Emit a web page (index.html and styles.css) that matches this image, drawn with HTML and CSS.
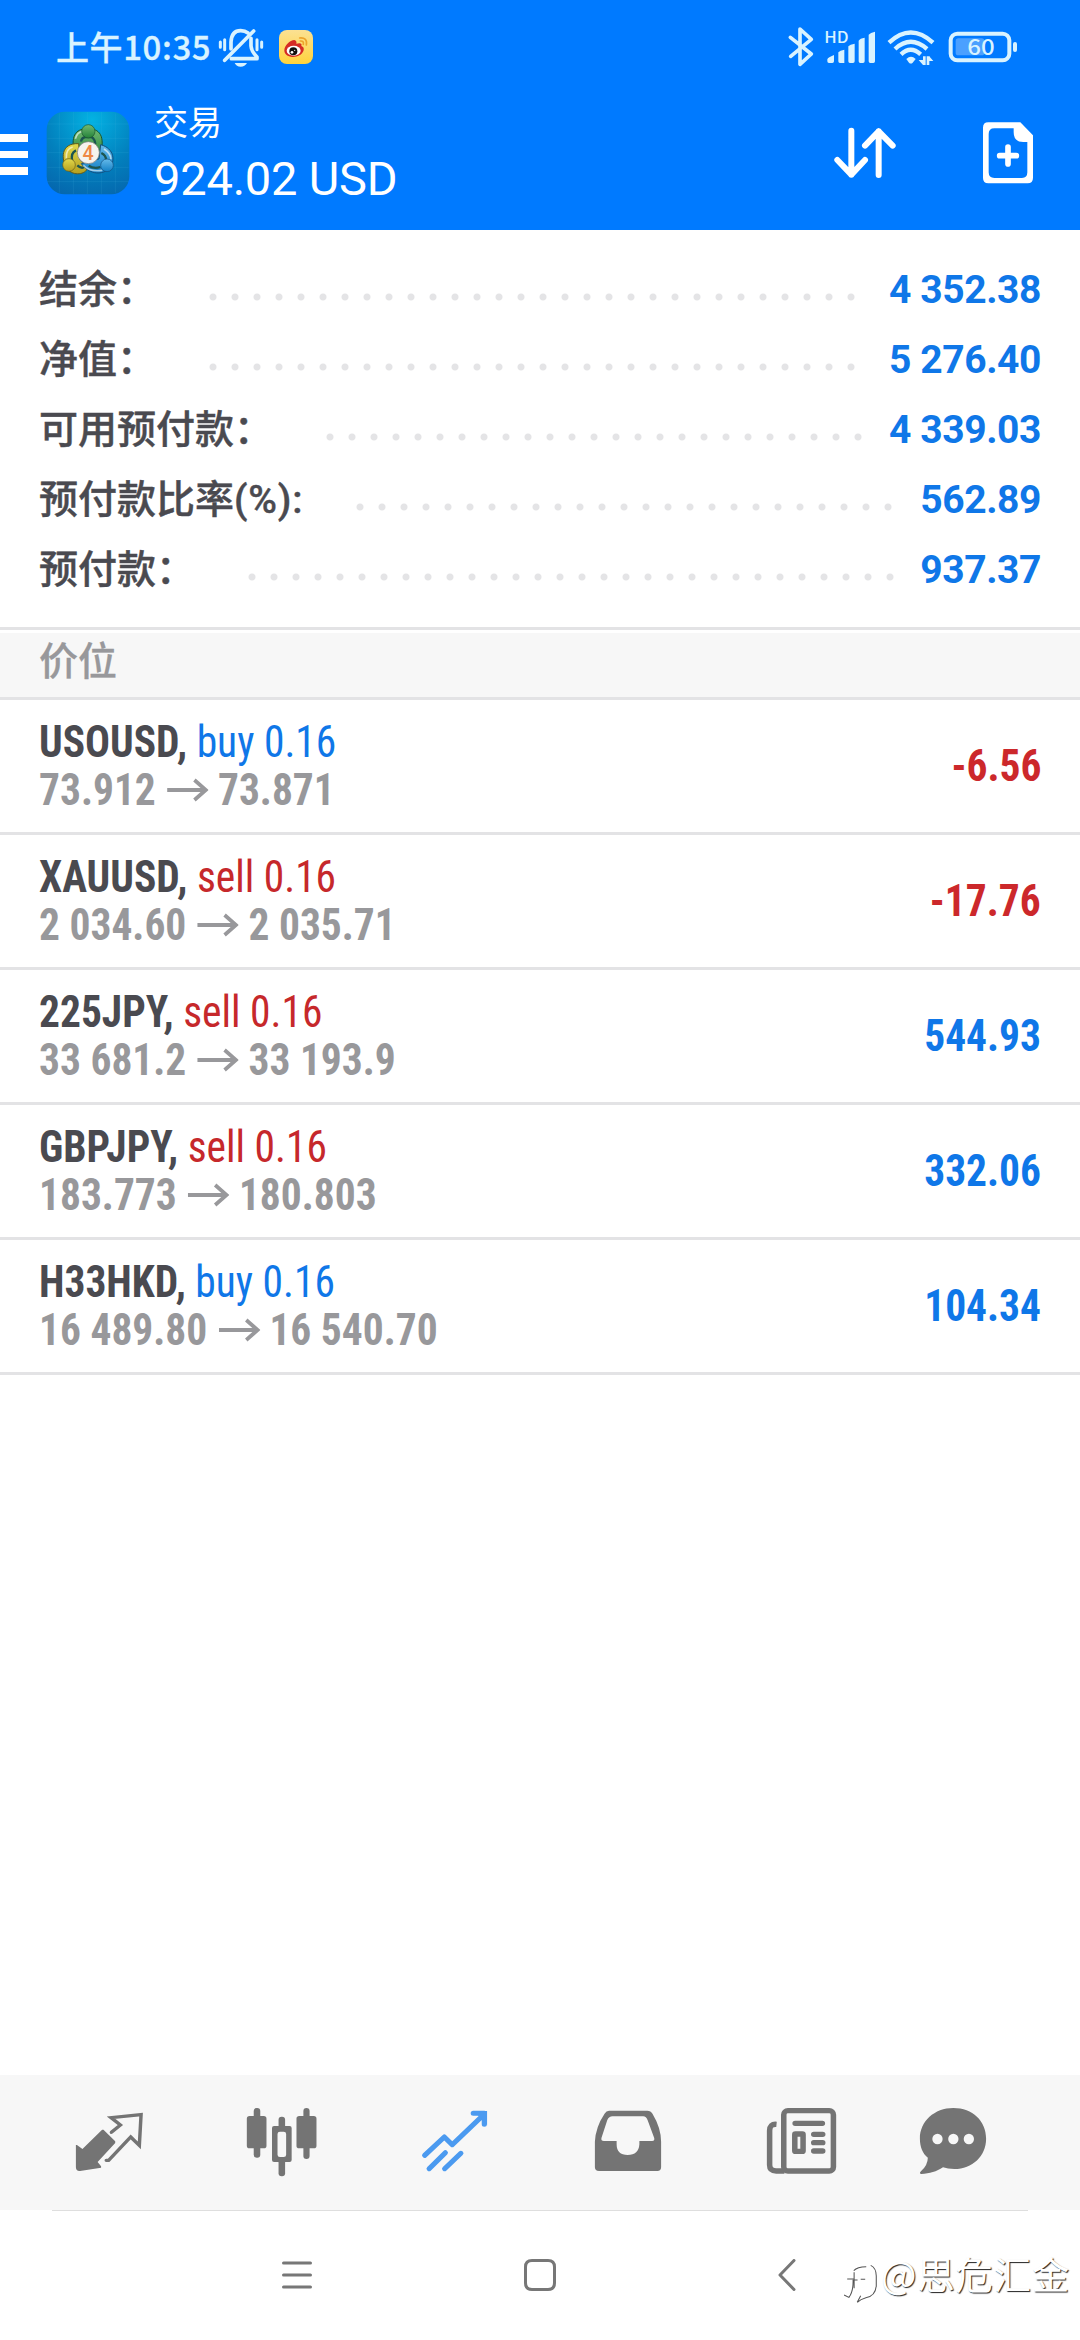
FILE: index.html
```html
<!DOCTYPE html>
<html lang="zh-CN">
<head>
<meta charset="utf-8">
<title>交易</title>
<link rel="stylesheet" href="styles.css">
</head>
<body>
<div class="screen">
  <header class="header">
    <div class="status">
      <span class="clock">上午10:35</span>
      <svg class="bell" viewBox="648 66 150 150" fill="none" stroke="#d9f3ff" stroke-linecap="round" stroke-linejoin="round">
        <path d="M693 147V126Q695 92 722 92Q735 92 744 99M753 115V138Q754 154 771 171V176H694" stroke-width="11"/>
        <path d="M761 93L674 181" stroke-width="11"/>
        <path d="M661 126v16M674 119v30M771 119v30M785 126v16" stroke-width="9"/>
        <path d="M704 189H741Q735 200 722 200T704 189Z" fill="#d9f3ff" stroke="none"/>
      </svg>
      <svg class="weibo" viewBox="834 66 108 150">
        <defs><linearGradient id="wb" x1="0" y1="0" x2="0" y2="1"><stop offset="0" stop-color="#fbe193"/><stop offset="1" stop-color="#ffd33c"/></linearGradient></defs>
        <rect x="837" y="90" width="102" height="102" rx="24" fill="url(#wb)"/>
        <path d="M853 151C853 137 870 120 883 120Q891 122 889 131Q908 126 904 138Q913 141 911 151C907 166 889 172 877 171C863 170 853 163 853 151Z" fill="#d52b25"/>
        <ellipse cx="881" cy="152" rx="21" ry="15" fill="#fff"/>
        <circle cx="880" cy="154" r="12" fill="#111"/><circle cx="876" cy="157" r="4" fill="#fff"/><circle cx="884" cy="151" r="2" fill="#fff"/>
        <path d="M899 114Q923 112 919 135M901 123Q912 122 910 133" fill="none" stroke="#eda32b" stroke-width="5" stroke-linecap="round"/>
      </svg>
      <div class="indicators">
        <svg class="bluetooth" viewBox="78 66 90 150" fill="none" stroke="#d9f3ff" stroke-width="11" stroke-linecap="round" stroke-linejoin="round"><path d="M91 112L154 162L120 193V87L154 118L92 169"/></svg>
        <svg class="signal" viewBox="186 66 168 150" fill="#d9f3ff">
          <text x="193" y="129" font-size="46" font-weight="500" textLength="73" lengthAdjust="spacingAndGlyphs">HD</text>
          <path d="M202 178Q204 172 222 165V184Q222 189 217 189H207Q202 189 202 184ZM235 157Q240 151 253 149V189H240Q235 189 235 184ZM265 139Q270 133 284 131V184Q284 189 279 189H270Q265 189 265 184ZM296 122Q300 115 314 113V184Q314 189 309 189H301Q296 189 296 184ZM326 104Q331 98 345 95V184Q345 189 340 189H331Q326 189 326 184Z"/>
        </svg>
        <svg class="wifi" viewBox="378 66 150 150" fill="none" stroke="#d9f3ff" stroke-width="13">
          <path d="M387 128Q452 67 519 128M405 147Q452 104 501 147M423 163Q452 136 482 163"/>
          <path d="M439 177Q453 164 467 177L458 188Q453 193 447 188Z" fill="#d9f3ff" stroke="none"/>
          <path d="M493 169v26M504 169v26" stroke-width="8"/><path d="M476 180h13v15ZM507 168v15h13Z" fill="#d9f3ff" stroke="none"/>
        </svg>
        <svg class="battery" viewBox="558 66 222 150">
          <rect x="587" y="115" width="86" height="51" rx="8" fill="#4ba0ff"/>
          <rect x="572" y="101" width="176" height="80" rx="20" fill="none" stroke="#d9f3ff" stroke-width="12"/>
          <rect x="759" y="126" width="12" height="30" rx="6" fill="#d9f3ff"/>
          <text x="622" y="166" font-size="66" font-weight="500" fill="#d9f3ff" textLength="82" lengthAdjust="spacingAndGlyphs">60</text>
        </svg>
      </div>
    </div>
    <div class="appbar">
      <div class="burger"><i></i><i></i><i></i></div>
      <svg class="logo" viewBox="138 333 252 252">
        <defs>
          <radialGradient id="bg" cx=".55" cy=".1" r=".95"><stop offset="0" stop-color="#03b2e3"/><stop offset=".6" stop-color="#0280bd"/><stop offset="1" stop-color="#0568ae"/></radialGradient>
          <linearGradient id="gr" x1="0" y1="0" x2="0" y2="1"><stop offset="0" stop-color="#73ba72"/><stop offset="1" stop-color="#23823a"/></linearGradient>
          <linearGradient id="ye" x1="0" y1="0" x2="0" y2="1"><stop offset="0" stop-color="#e2d94c"/><stop offset="1" stop-color="#b5a020"/></linearGradient>
          <linearGradient id="bl" x1="0" y1="0" x2="0" y2="1"><stop offset="0" stop-color="#65b9e9"/><stop offset="1" stop-color="#1380c6"/></linearGradient>
        </defs>
        <rect x="140" y="335" width="248" height="248" rx="54" fill="url(#bg)"/>
        <path d="M178 340V578M220 336V582M262 336V582M304 336V582M346 340V578M142 372H386M142 415H386M142 458H386M142 502H386M142 545H386" stroke="#53bfe4" stroke-opacity=".2" stroke-width="2"/>
        <path d="M223 458C210 400 233 386 264 386C297 386 318 405 300 470Z" fill="url(#gr)" stroke="#19552b" stroke-width="3"/>
        <path d="M236 431C180 428 183 480 202 507C221 530 257 523 263 504L240 480Z" fill="url(#ye)" stroke="#635a18" stroke-width="3"/>
        <path d="M302 434C343 445 348 484 326 508C300 527 266 521 244 491L297 477Z" fill="url(#bl)" stroke="#125080" stroke-width="3"/>
        <path d="M243 425Q245 413 256 411L274 411Q285 417 286 432M217 483Q211 459 228 451M304 459Q319 466 318 481M232 496Q245 508 254 500M266 497Q283 508 301 501" fill="none" stroke="#1c5550" stroke-width="7"/>
        <path d="M226 416Q232 395 249 394M199 475Q197 446 218 441M312 447Q333 461 333 478M250 496Q270 517 307 511" fill="none" stroke="#fff" stroke-opacity=".6" stroke-width="5"/>
        <circle cx="265" cy="394" r="20" fill="url(#gr)" stroke="#19552b" stroke-width="2"/><circle cx="207" cy="495" r="19" fill="url(#ye)" stroke="#635a18" stroke-width="2"/><circle cx="321" cy="496" r="19" fill="url(#bl)" stroke="#125080" stroke-width="2"/>
        <circle cx="265" cy="458" r="33" fill="#f6f3ee" stroke="#777" stroke-width="2"/>
        <text x="264" y="480" text-anchor="middle" font-family="Roboto, sans-serif" font-size="59" font-weight="500" fill="#ee8845">4</text>
      </svg>
      <div class="titles"><div class="title">交易</div><div class="total">924.02 USD</div></div>
      <svg class="sort" viewBox="216 375 198 168" fill="none" stroke="#fff" stroke-width="18" stroke-linecap="round" stroke-linejoin="round"><path d="M274 392V524M232 480L274 524L315 480M356 525V394M315 437L356 394L398 437"/></svg>
      <svg class="add" viewBox="666 363 156 192">
        <path d="M685 367H781L819 406V533Q819 550 803 550H685Q669 550 669 534V383Q669 367 685 367ZM703 385Q686 385 686 402V517Q686 534 703 534H786Q802 534 802 517V426H790Q761 426 761 397V385Z" fill="#fff" fill-rule="evenodd"/>
        <path d="M719 467H769M744 441V492" stroke="#fff" stroke-width="17" stroke-linecap="round"/>
      </svg>
    </div>
  </header>

  <section class="summary">
    <div class="item"><span class="label">结余：</span><span class="dots" style="width:660px"></span><span class="value">4 352.38</span></div>
    <div class="item"><span class="label">净值：</span><span class="dots" style="width:660px"></span><span class="value">5 276.40</span></div>
    <div class="item"><span class="label">可用预付款：</span><span class="dots" style="width:550px"></span><span class="value">4 339.03</span></div>
    <div class="item"><span class="label">预付款比率<span class="unit">(%):</span></span><span class="dots" style="width:550px"></span><span class="value">562.89</span></div>
    <div class="item"><span class="label">预付款：</span><span class="dots" style="width:660px"></span><span class="value">937.37</span></div>
  </section>

  <h2 class="section">价位</h2>

  <main class="positions">
    <div class="position"><div class="info"><div><b>USOUSD,</b> <span class="buy">buy 0.16</span></div><div class="prices">73.912<svg class="arrow" viewBox="0 0 44 24"><path d="M0 12H41M29 2L41 12L29 22"/></svg>73.871</div></div><div class="profit loss">-6.56</div></div>
    <div class="position"><div class="info"><div><b>XAUUSD,</b> <span class="sell">sell 0.16</span></div><div class="prices">2 034.60<svg class="arrow" viewBox="0 0 44 24"><path d="M0 12H41M29 2L41 12L29 22"/></svg>2 035.71</div></div><div class="profit loss">-17.76</div></div>
    <div class="position"><div class="info"><div><b>225JPY,</b> <span class="sell">sell 0.16</span></div><div class="prices">33 681.2<svg class="arrow" viewBox="0 0 44 24"><path d="M0 12H41M29 2L41 12L29 22"/></svg>33 193.9</div></div><div class="profit">544.93</div></div>
    <div class="position"><div class="info"><div><b>GBPJPY,</b> <span class="sell">sell 0.16</span></div><div class="prices">183.773<svg class="arrow" viewBox="0 0 44 24"><path d="M0 12H41M29 2L41 12L29 22"/></svg>180.803</div></div><div class="profit">332.06</div></div>
    <div class="position"><div class="info"><div><b>H33HKD,</b> <span class="buy">buy 0.16</span></div><div class="prices">16 489.80<svg class="arrow" viewBox="0 0 44 24"><path d="M0 12H41M29 2L41 12L29 22"/></svg>16 540.70</div></div><div class="profit">104.34</div></div>
  </main>

  <nav class="tabs">
    <svg viewBox="199 93 232 240" preserveAspectRatio="none">
      <path d="M295 179H299L333 214V219L282 276L292 289V293L231 303Q219 304 219 292V225H222L238 237Z" fill="#747474"/>
      <path d="M322 187L348 165L321 143L408 134L403 226L378 201L314 271H307" fill="none" stroke="#747474" stroke-width="10" stroke-linecap="round"/>
    </svg>
    <svg viewBox="701 93 232 240" preserveAspectRatio="none" fill="#747474">
      <rect x="735" y="114" width="19" height="149" rx="9"/><rect x="715" y="138" width="57" height="97" rx="8"/>
      <rect x="879" y="114" width="18" height="153" rx="9"/><rect x="859" y="138" width="58" height="97" rx="8"/>
      <rect x="807" y="140" width="19" height="36" rx="9"/><rect x="807" y="268" width="19" height="51" rx="9"/>
      <path fill-rule="evenodd" d="M794 168H839Q845 168 845 174V270Q845 276 839 276H794Q788 276 788 270V174Q788 168 794 168ZM811 185Q804 185 804 192V254Q804 261 811 261H822Q829 261 829 254V192Q829 185 822 185Z"/>
    </svg>
    <svg viewBox="1204 93 232 240" preserveAspectRatio="none" fill="none" stroke="#4b9af0" stroke-width="15" stroke-linecap="round" stroke-linejoin="round">
      <path d="M1232 256L1289 201L1312 224L1403 134M1373 130H1405V163"/><path d="M1245 296L1292 248M1290 296L1337 250"/>
      <path d="M1372 123H1413V166L1400 148Z" fill="#4b9af0" stroke="none"/>
    </svg>
    <svg viewBox="138 93 232 240" preserveAspectRatio="none">
      <path d="M199 122H310Q320 122 325 131Q350 174 350 215V292Q350 303 339 303H170Q158 303 158 292V215Q160 171 186 131Q191 122 199 122ZM209 139Q199 139 194 150L177 204Q175 213 184 213H221V223Q221 255 253 255T287 223V213H324Q332 213 330 204L311 151Q307 139 298 139Z" fill="#747474" fill-rule="evenodd"/>
    </svg>
    <svg viewBox="640 93 232 240" preserveAspectRatio="none" fill="none" stroke="#747474" stroke-width="16">
      <rect x="706" y="122" width="144" height="181" rx="12"/><path d="M685 163Q665 161 665 182V285Q665 303 684 303H708"/>
      <path d="M739 160H818M793 193H819M793 218H819M793 243H819" stroke-linecap="round"/>
      <rect x="738" y="192" width="24" height="52" rx="2"/>
    </svg>
    <svg viewBox="1083 93 232 240" preserveAspectRatio="none">
      <path d="M1200 114C1256 114 1295 153 1295 206C1295 258 1255 297 1203 297Q1183 297 1170 292C1151 305 1132 311 1107 312Q1100 311 1106 304Q1126 285 1126 263C1111 251 1103 230 1103 206C1103 154 1145 114 1200 114Z" fill="#747474"/>
      <g fill="#f7f7f7"><ellipse cx="1154" cy="207" rx="15" ry="16"/><ellipse cx="1200" cy="207" rx="15" ry="16"/><ellipse cx="1245" cy="207" rx="15" ry="16"/></g>
    </svg>
  </nav>

  <footer class="system">
    <svg class="recent" viewBox="0 0 32 32" fill="none" stroke="#777" stroke-width="3" stroke-linecap="round"><path d="M2.500 4H29.500M2.500 16H29.500M2.500 28H29.500"/></svg>
    <svg class="home" viewBox="0 0 32 32" fill="none" stroke="#777" stroke-width="3"><path d="M8 1.500H24Q30.500 1.500 30.500 8V24Q30.500 30.500 24 30.500H8Q1.500 30.500 1.500 24V8Q1.500 1.500 8 1.500Z"/></svg>
    <svg class="back" viewBox="0 0 18 32" fill="none" stroke="#777" stroke-width="3" stroke-linecap="round" stroke-linejoin="round"><path d="M16 1.500L2 16L16 30.500"/></svg>
    <div class="watermark">
      <svg viewBox="876 570 104 135" preserveAspectRatio="none" fill="none" stroke="#555" stroke-width="3">
        <path d="M910 602Q920 590 946 590M891 627H911V607M908 629Q909 665 896 682L882 675M911 655V630H921M930 628H943M959 586Q975 594 975 618V648Q972 679 945 683Q930 687 920 697M920 697L930 677"/>
      </svg>
      <span>@思危汇金</span>
    </div>
  </footer>
</div>
</body>
</html>
```
FILE: styles.css
```css
* { box-sizing: border-box; }
body { margin: 0; background: #fff; font-family: Roboto, "Noto Sans CJK SC", sans-serif; }
svg { display: block; flex: none; }
.screen { width: 1080px; height: 2340px; display: flex; flex-direction: column; overflow: hidden; }

.header { height: 230px; background: #007aff; color: #fff; flex: none; }
.status { height: 94px; padding: 22px 60px 0 56px; display: flex; align-items: flex-start; color: #d9f3ff; font-family: "Noto Sans CJK SC", sans-serif; }
.clock { width: 160px; font-size: 33px; font-weight: 500; line-height: 48px; white-space: nowrap; letter-spacing: 0.6px; -webkit-text-stroke: 0.3px #d9f3ff; }
.bell { width: 50px; height: 50px; }
.weibo { width: 36px; height: 50px; margin-left: 12px; }
.indicators { margin-left: auto; display: flex; }
.bluetooth { width: 30px; height: 50px; }
.signal { width: 56px; height: 50px; margin-left: 6px; }
.wifi { width: 50px; height: 50px; margin-left: 8px; }
.battery { width: 74px; height: 50px; margin-left: 10px; }

.appbar { height: 118px; display: flex; align-items: flex-start; }
.burger { width: 28px; margin-top: 40px; display: flex; flex-direction: column; gap: 9px; }
.burger i { height: 7.500px; background: #fff; }
.logo { width: 84px; height: 84px; margin: 17px 0 0 18px; }
.titles { margin-left: 24px; flex: 1; }
.title { font-size: 34px; line-height: 50px; margin-top: 4px; }
.total { font-size: 47px; line-height: 56px; margin-top: 3px; letter-spacing: -0.2px; }
.sort { width: 66px; height: 56px; margin: 31px 84px 0 0; }
.add { width: 52px; height: 64px; margin: 27px 46px 0 0; }

.summary { height: 400px; padding: 23px 39px 0; border-bottom: 3px solid #e3e3e5; flex: none; }
.item { height: 70px; display: flex; align-items: center; }
.label { margin-top: -4px; font-family: "Noto Sans CJK SC", sans-serif; font-size: 39px; font-weight: 500; color: #4a4a50; line-height: 60px; white-space: nowrap; -webkit-text-stroke: 0.4px #4a4a50; }
.unit { font-family: Roboto, sans-serif; line-height: 1; letter-spacing: 0.8px; }
.dots { height: 8px; margin: 17px 0 0 46px; background: radial-gradient(circle at center, #e4e4e6 3px, transparent 4px) 0 0 / 22px 8px repeat-x; }
.value { margin: 3px 0 0 auto; font-size: 39px; font-weight: 700; color: #0f77e8; white-space: nowrap; letter-spacing: -0.4px; }

.section { height: 67px; margin: 3px 0 0; padding-left: 39px; background: #f7f7f7; border-bottom: 3px solid #e3e3e5; color: #98989b; font-family: "Noto Sans CJK SC", sans-serif; font-size: 39px; font-weight: 500; line-height: 50px; flex: none; -webkit-text-stroke: 0.3px #98989b; }

.positions { flex: 1; }
.position { height: 135px; padding: 0 39px; border-bottom: 3px solid #e3e3e5; display: flex; justify-content: space-between; align-items: center; font-family: "Roboto Condensed", Roboto, sans-serif; font-stretch: 75%; font-size: 44px; white-space: nowrap; }
.info { line-height: 48px; color: #4a4a50; transform: scaleX(0.942); transform-origin: left; }
.buy, .sell { font-weight: 450; }
.buy { color: #0f77e8; }
.sell { color: #c6282b; }
.prices { display: flex; align-items: center; color: #98989b; font-weight: 700; }
.arrow { width: 44px; height: 24px; margin: 0 10px 0 12px; fill: none; stroke: #98989b; stroke-width: 4; }
.profit { color: #0f77e8; font-weight: 700; transform: scaleX(0.942); transform-origin: right; }
.loss { color: #cc282b; }

.tabs { height: 135px; padding: 26px 0 0 68.500px; background: #f7f7f7; display: flex; gap: 93px; flex: none; }
.tabs svg { width: 80px; height: 80px; }
.tabs svg:last-child { margin-left: -20.500px; }

.system { height: 130px; display: flex; align-items: flex-start; padding: 49px 0 0 281px; flex: none; background: linear-gradient(#dedede, #dedede) 52px 0 / 976px 1px no-repeat #fff; }
.recent, .home { width: 32px; height: 32px; }
.home { margin-left: 211px; }
.back { width: 18px; height: 32px; margin-left: 222px; }
.watermark { display: flex; margin-left: 46px; color: #fff; font-family: "Noto Sans CJK SC", sans-serif; font-size: 37.500px; line-height: 40px; white-space: nowrap; letter-spacing: 0.7px; text-shadow: 1px 1px 1px #222; }
.watermark svg { width: 36px; height: 45px; margin: 1px 3px 0 0; }
.watermark span { margin-top: -6px; }
```
